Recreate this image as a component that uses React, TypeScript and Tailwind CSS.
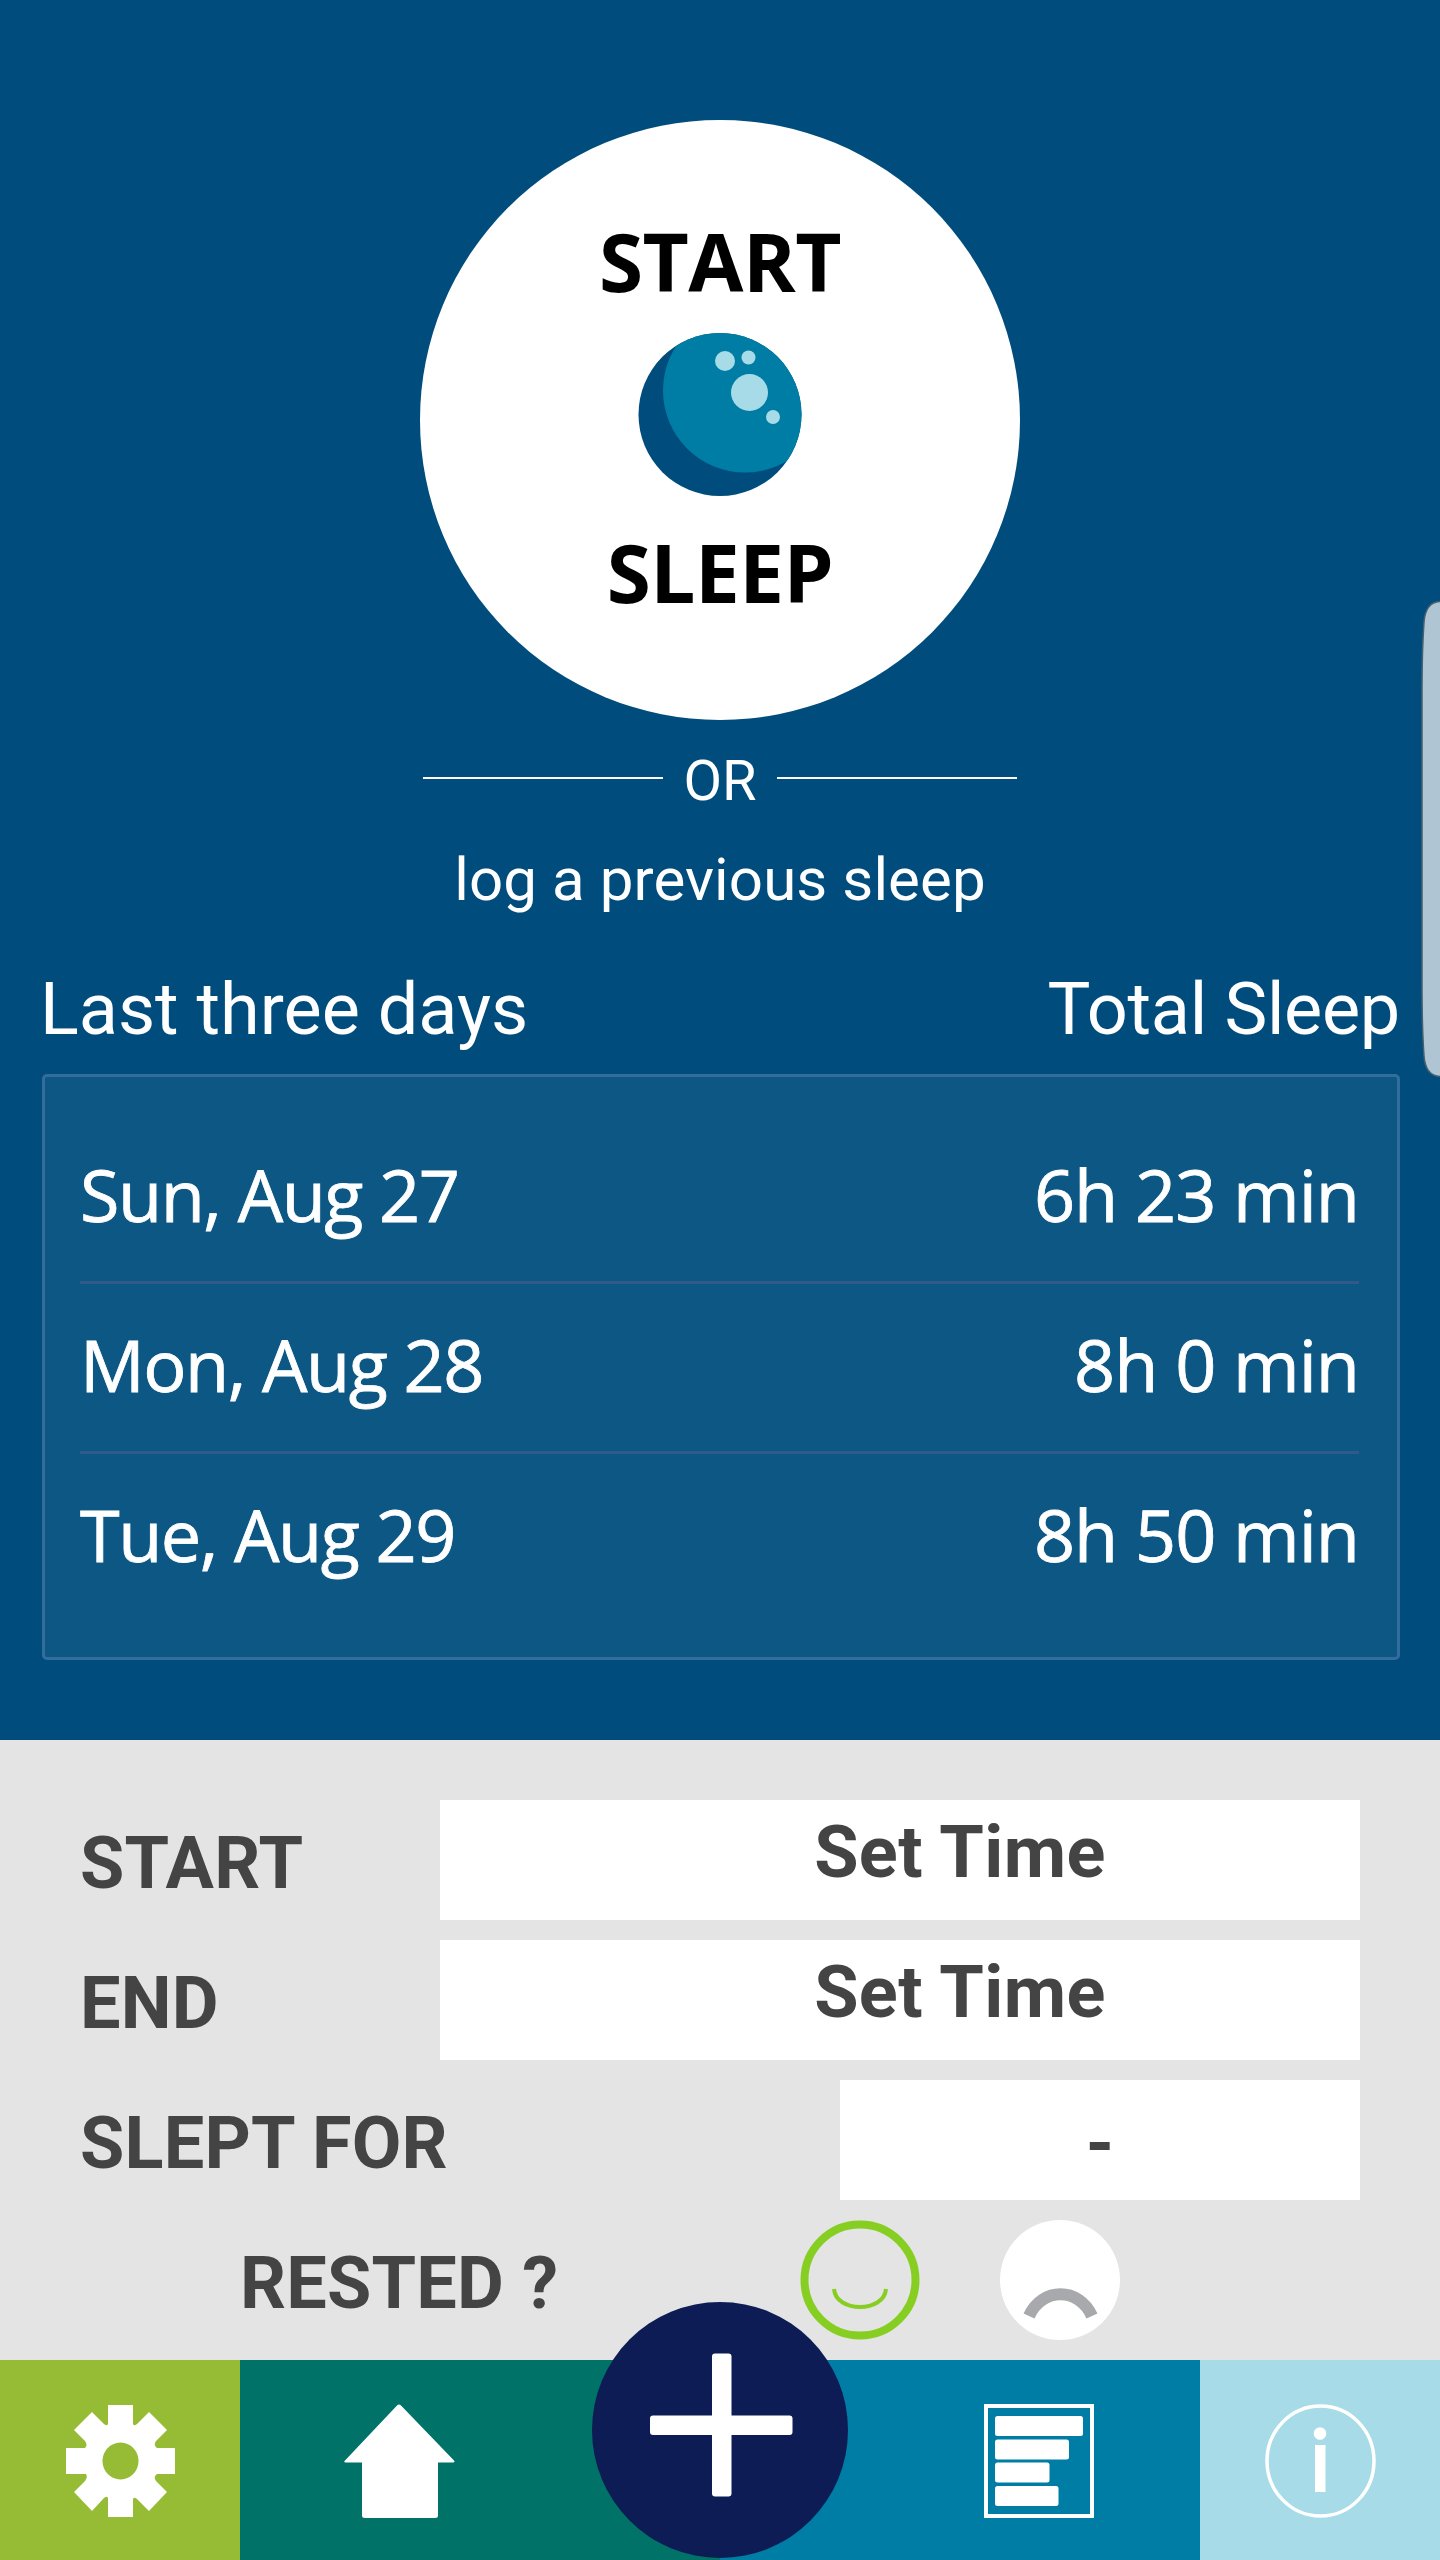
import { useState } from "react";

const days = [
  { day: "Sun, Aug 27", total: "6h 23 min" },
  { day: "Mon, Aug 28", total: "8h 0 min" },
  { day: "Tue, Aug 29", total: "8h 50 min" },
];

function MoonIcon() {
  return (
    <svg width="164" height="164" viewBox="0 0 164 164" className="mt-[17px]">
      <clipPath id="moon">
        <circle cx="82" cy="82.5" r="81.5" />
      </clipPath>
      <g clipPath="url(#moon)">
        <rect width="164" height="164" fill="#004d7d" />
        <circle cx="107" cy="58.5" r="82" fill="#007da5" />
      </g>
      <g fill="#a7dbe8">
        <circle cx="87" cy="29" r="10" />
        <circle cx="110.5" cy="25.5" r="7" />
        <circle cx="111.5" cy="60.5" r="18.5" />
        <circle cx="135" cy="85" r="7" />
      </g>
    </svg>
  );
}

function GearIcon() {
  return (
    <svg width="112" height="114" viewBox="0 0 112 114" fill="#fff">
      <path
        fillRule="evenodd"
        d="M44 1h25v18q0 4 4 1l12-12 18 18-11 11q-3 4 1 7h18v26H93q-4 3-1 7l11 11-18 19-12-12q-4-3-4 1v17H44V95q0-4-4-1l-12 13-18-19 11-11q3-4 1-7H2V44h19q3-3 0-7L10 26 28 8l12 12q4 3 4-1ZM56.500 38.500a18 18.500 0 1 0 .01 0Z"
      />
    </svg>
  );
}

function HomeIcon() {
  return (
    <svg width="114" height="114" viewBox="0 0 114 114" fill="#fff">
      <path d="M54 1.500q2-2 4 0l53 55q1.500 2-1 2H95v53q0 2.500-3 2.500H22q-3 0-3-2.500v-53H3q-3 0-1-2Z" />
    </svg>
  );
}

function ReportIcon() {
  return (
    <svg width="110" height="114" viewBox="0 0 110 114" fill="#fff">
      <rect x="2" y="2" width="106" height="110" fill="none" stroke="#fff" strokeWidth="4" />
      <rect x="11" y="12" width="88" height="20" rx="2.500" />
      <rect x="11" y="35.500" width="74" height="20" rx="2.500" />
      <rect x="11" y="58.500" width="54.500" height="20" rx="2.500" />
      <rect x="11" y="82" width="63.500" height="20" rx="2.500" />
    </svg>
  );
}

function InfoIcon() {
  return (
    <svg width="112" height="114" viewBox="0 0 112 114" fill="#fff">
      <ellipse cx="56.500" cy="57" rx="53.500" ry="55" fill="none" stroke="#fff" strokeWidth="3.500" />
      <circle cx="56" cy="29.500" r="6.300" />
      <rect x="51" y="41" width="10.500" height="47" />
    </svg>
  );
}

function TimeRow({ label }: { label: string }) {
  return (
    <div className="flex justify-between h-[120px] mb-5">
      <span className="pt-[21px]">{label}</span>
      <button className="w-[920px] pl-[120px] pb-[25px] pt-[10px] bg-white font-bold tracking-[0.4px]">Set Time</button>
    </div>
  );
}

export default function App() {
  const [rested, setRested] = useState(true);

  return (
    <div className="relative w-[1440px] h-[2560px] flex flex-col overflow-hidden bg-[#004d7d] font-['Roboto',sans-serif] text-white">
      {/* Start sleep */}
      <div className="h-[1740px] pt-[120px] flex flex-col items-center">
        <button className="w-[600px] h-[600px] rounded-full bg-white flex flex-col items-center pt-[86px] font-['Open_Sans',sans-serif] font-bold text-[80px] leading-[109px] tracking-[-0.5px] text-black">
          <span>START</span>
          <MoonIcon />
          <span className="mt-[21px]">SLEEP</span>
        </button>

        <div className="flex mt-7 text-[56px] leading-[66px]">
          <div className="w-60 h-0.5 mt-[29px] bg-white" />
          <span className="w-[114px] text-center">OR</span>
          <div className="w-60 h-0.5 mt-[29px] bg-white" />
        </div>
        <p className="mt-[30px] text-[60px] leading-[71px] tracking-[0.1px]">log a previous sleep</p>

        {/* Last three days */}
        <div className="w-[1360px] mt-[52px] flex justify-between text-[72px] leading-[85px]">
          <h2>Last three days</h2>
          <h2 className="tracking-[-0.3px]">Total Sleep</h2>
        </div>
        <div className="w-[1358px] h-[586px] mt-[22px] ml-0.5 pl-[35px] pr-[38px] pt-[37px] border-[3px] border-[#336d9c] rounded-[5px] bg-[#0d5784] font-['Open_Sans',sans-serif] text-[72px] leading-[98px] [-webkit-text-stroke:0.8px_white]">
          {days.map((d) => (
            <div key={d.day} className="h-[170px] pt-[31px] flex justify-between border-b-[3px] border-[#315a8b] last:border-b-0">
              <span className="tracking-[-1.5px]">{d.day}</span>
              <span className="tracking-[-1px]">{d.total}</span>
            </div>
          ))}
        </div>
      </div>

      {/* Log form */}
      <div className="h-[620px] px-20 pt-[60px] bg-[#e4e4e4] text-[#444] text-[72px] leading-[85px] font-bold tracking-[0.2px]">
        <TimeRow label="START" />
        <TimeRow label="END" />
        <div className="flex justify-between h-[120px] mb-5">
          <span className="pt-[21px]">SLEPT FOR</span>
          <div className="w-[520px] pt-[21px] bg-white text-center">-</div>
        </div>
        <div className="flex h-[120px] pl-40">
          <span className="w-[560px] pt-[21px]">RESTED ?</span>
          <button className="w-[120px] h-[120px]" onClick={() => setRested(true)} aria-pressed={rested}>
            <svg width="120" height="120" fill="none" stroke="#86cf22">
              <circle cx="60" cy="60" r="55.500" strokeWidth="8" />
              <path d="M34 69c2 24 50 24 52 0" strokeWidth="4" />
            </svg>
          </button>
          <button className="w-[120px] h-[120px] ml-20" onClick={() => setRested(false)} aria-pressed={!rested}>
            <svg width="120" height="120">
              <circle cx="60" cy="60" r="60" fill="#fff" />
              <path d="M29 96c13-29 50-29 63 0" fill="none" stroke="#a7a9ac" strokeWidth="12" />
            </svg>
          </button>
        </div>
      </div>

      {/* Bottom nav */}
      <nav className="relative flex h-[200px]">
        <a className="w-60 flex justify-center pt-11 bg-[#96bc36]"><GearIcon /></a>
        <a className="w-[480px] pl-[103px] pt-11 bg-[#007268]"><HomeIcon /></a>
        <a className="w-[480px] pl-[264px] pt-11 bg-[#007da5]"><ReportIcon /></a>
        <a className="w-60 flex justify-center pt-11 bg-[#a7dbe8]"><InfoIcon /></a>
        <button className="absolute left-[592px] bottom-[2px] w-64 h-64 rounded-full bg-[#0d1c54]">
          <svg width="256" height="256" fill="#fff">
            <rect x="120" y="51.500" width="19.500" height="143" rx="3" />
            <rect x="58" y="113.500" width="142.500" height="19.500" rx="3" />
          </svg>
        </button>
      </nav>

      {/* Edge panel handle */}
      <svg width="19" height="478" className="absolute right-0 top-[600px]">
        <path d="M21 1.500H19C9 2 4 9 3 22Q1 50 1 90V388Q1 428 3 456C4 469 9 476 19 476.500H21Z" fill="#afc5d3" stroke="#45606f" strokeWidth="1.500" />
      </svg>
    </div>
  );
}
